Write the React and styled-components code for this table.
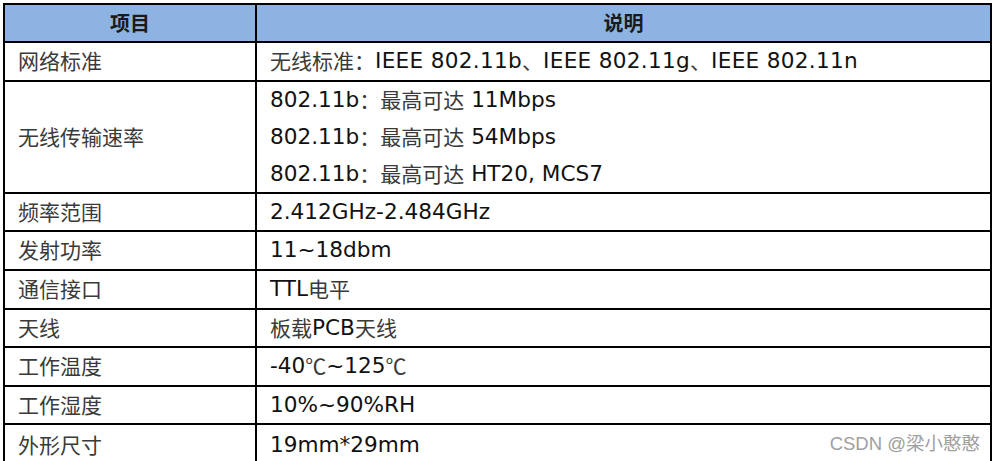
import React from "react";
import styled, { createGlobalStyle } from "styled-components";

const Global = createGlobalStyle`
  html, body {
    margin: 0;
    padding: 0;
    background: #ffffff;
    overflow: hidden;
  }
  body {
    font-family: "DejaVu Sans", "Noto Sans CJK SC", sans-serif;
  }
`;

const Page = styled.div`
  position: relative;
  width: 995px;
  height: 461px;
  overflow: hidden;
  padding: 3px 0 0 3px;
  box-sizing: border-box;
`;

const Table = styled.div`
  display: grid;
  grid-template-columns: 250px 733px;
  grid-template-rows: 36px 37px 110px 36px 37px 37px 36px 37px 36px 40px;
  gap: 2px;
  padding: 2px;
  background: #000000;
  width: max-content;
`;

const Cell = styled.div`
  background: ${(p) => (p.$head ? "#8db3e2" : "#ffffff")};
  display: flex;
  flex-direction: column;
  justify-content: center;
  align-items: ${(p) => (p.$head ? "center" : "flex-start")};
  padding: 0 ${(p) => (p.$head ? "0" : "13px")} 2px;
  font-size: 21.6px;
  font-weight: ${(p) => (p.$head ? 700 : 400)};
  color: #000000;
  white-space: nowrap;
  line-height: 37px;
`;

const HeadText = styled.span`
  font-family: "Noto Sans CJK SC", sans-serif;
  font-size: 20px;
  font-weight: 700;
  color: #1a1a1a;
`;

const Cn = styled.span`
  font-family: "Noto Sans CJK SC", sans-serif;
  font-size: 21px;
  color: #3a3a3a;
  font-weight: 400;
`;

const Latin = styled.span`
  white-space: pre;
  color: #111111;
  letter-spacing: ${(p) => (p.$wide ? "0.3px" : "0")};
`;

const Line = styled.div`
  height: 37px;
  display: flex;
  align-items: center;
`;

const Watermark = styled.div`
  position: absolute;
  right: 15px;
  top: 429px;
  font-family: "Liberation Sans", "Noto Sans CJK SC", sans-serif;
  font-size: 18.5px;
  color: #a0a0a0;
  text-shadow: 0 0 2px #ffffff, 0 0 2px #ffffff;
  white-space: nowrap;
`;

const rows = [
  { k: "网络标准", v: [[["c", "无线标准："], ["w", "IEEE 802.11b"], ["c", "、"], ["w", "IEEE 802.11g"], ["c", "、"], ["w", "IEEE 802.11n"]]] },
  {
    k: "无线传输速率",
    v: [
      [["l", "802.11b"], ["c", "：最高可达"], ["l", " 11Mbps"]],
      [["l", "802.11b"], ["c", "：最高可达"], ["l", " 54Mbps"]],
      [["l", "802.11b"], ["c", "：最高可达"], ["l", " HT20, MCS7"]],
    ],
  },
  { k: "频率范围", v: [[["l", "2.412GHz-2.484GHz"]]] },
  { k: "发射功率", v: [[["l", "11~18dbm"]]] },
  { k: "通信接口", v: [[["l", "TTL"], ["c", "电平"]]] },
  { k: "天线", v: [[["c", "板载"], ["l", "PCB"], ["c", "天线"]]] },
  { k: "工作温度", v: [[["l", "-40"], ["c", "℃"], ["l", "~125"], ["c", "℃"]]] },
  { k: "工作湿度", v: [[["l", "10%~90%RH"]]] },
  { k: "外形尺寸", v: [[["l", "19mm*29mm"]]] },
];

function Parts({ parts }) {
  return parts.map(([t, s], i) =>
    t === "c" ? (
      <Cn key={i}>{s}</Cn>
    ) : (
      <Latin key={i} $wide={t === "w"}>
        {s}
      </Latin>
    )
  );
}

export default function App() {
  return (
    <>
      <Global />
      <Page>
        <Table>
          <Cell $head>
            <HeadText>项目</HeadText>
          </Cell>
          <Cell $head>
            <HeadText>说明</HeadText>
          </Cell>
          {rows.map((r, i) => (
            <React.Fragment key={i}>
              <Cell>
                <Cn>{r.k}</Cn>
              </Cell>
              <Cell>
                {r.v.map((line, j) => (
                  <Line key={j}>
                    <Parts parts={line} />
                  </Line>
                ))}
              </Cell>
            </React.Fragment>
          ))}
        </Table>
        <Watermark>CSDN @梁小憨憨</Watermark>
      </Page>
    </>
  );
}
